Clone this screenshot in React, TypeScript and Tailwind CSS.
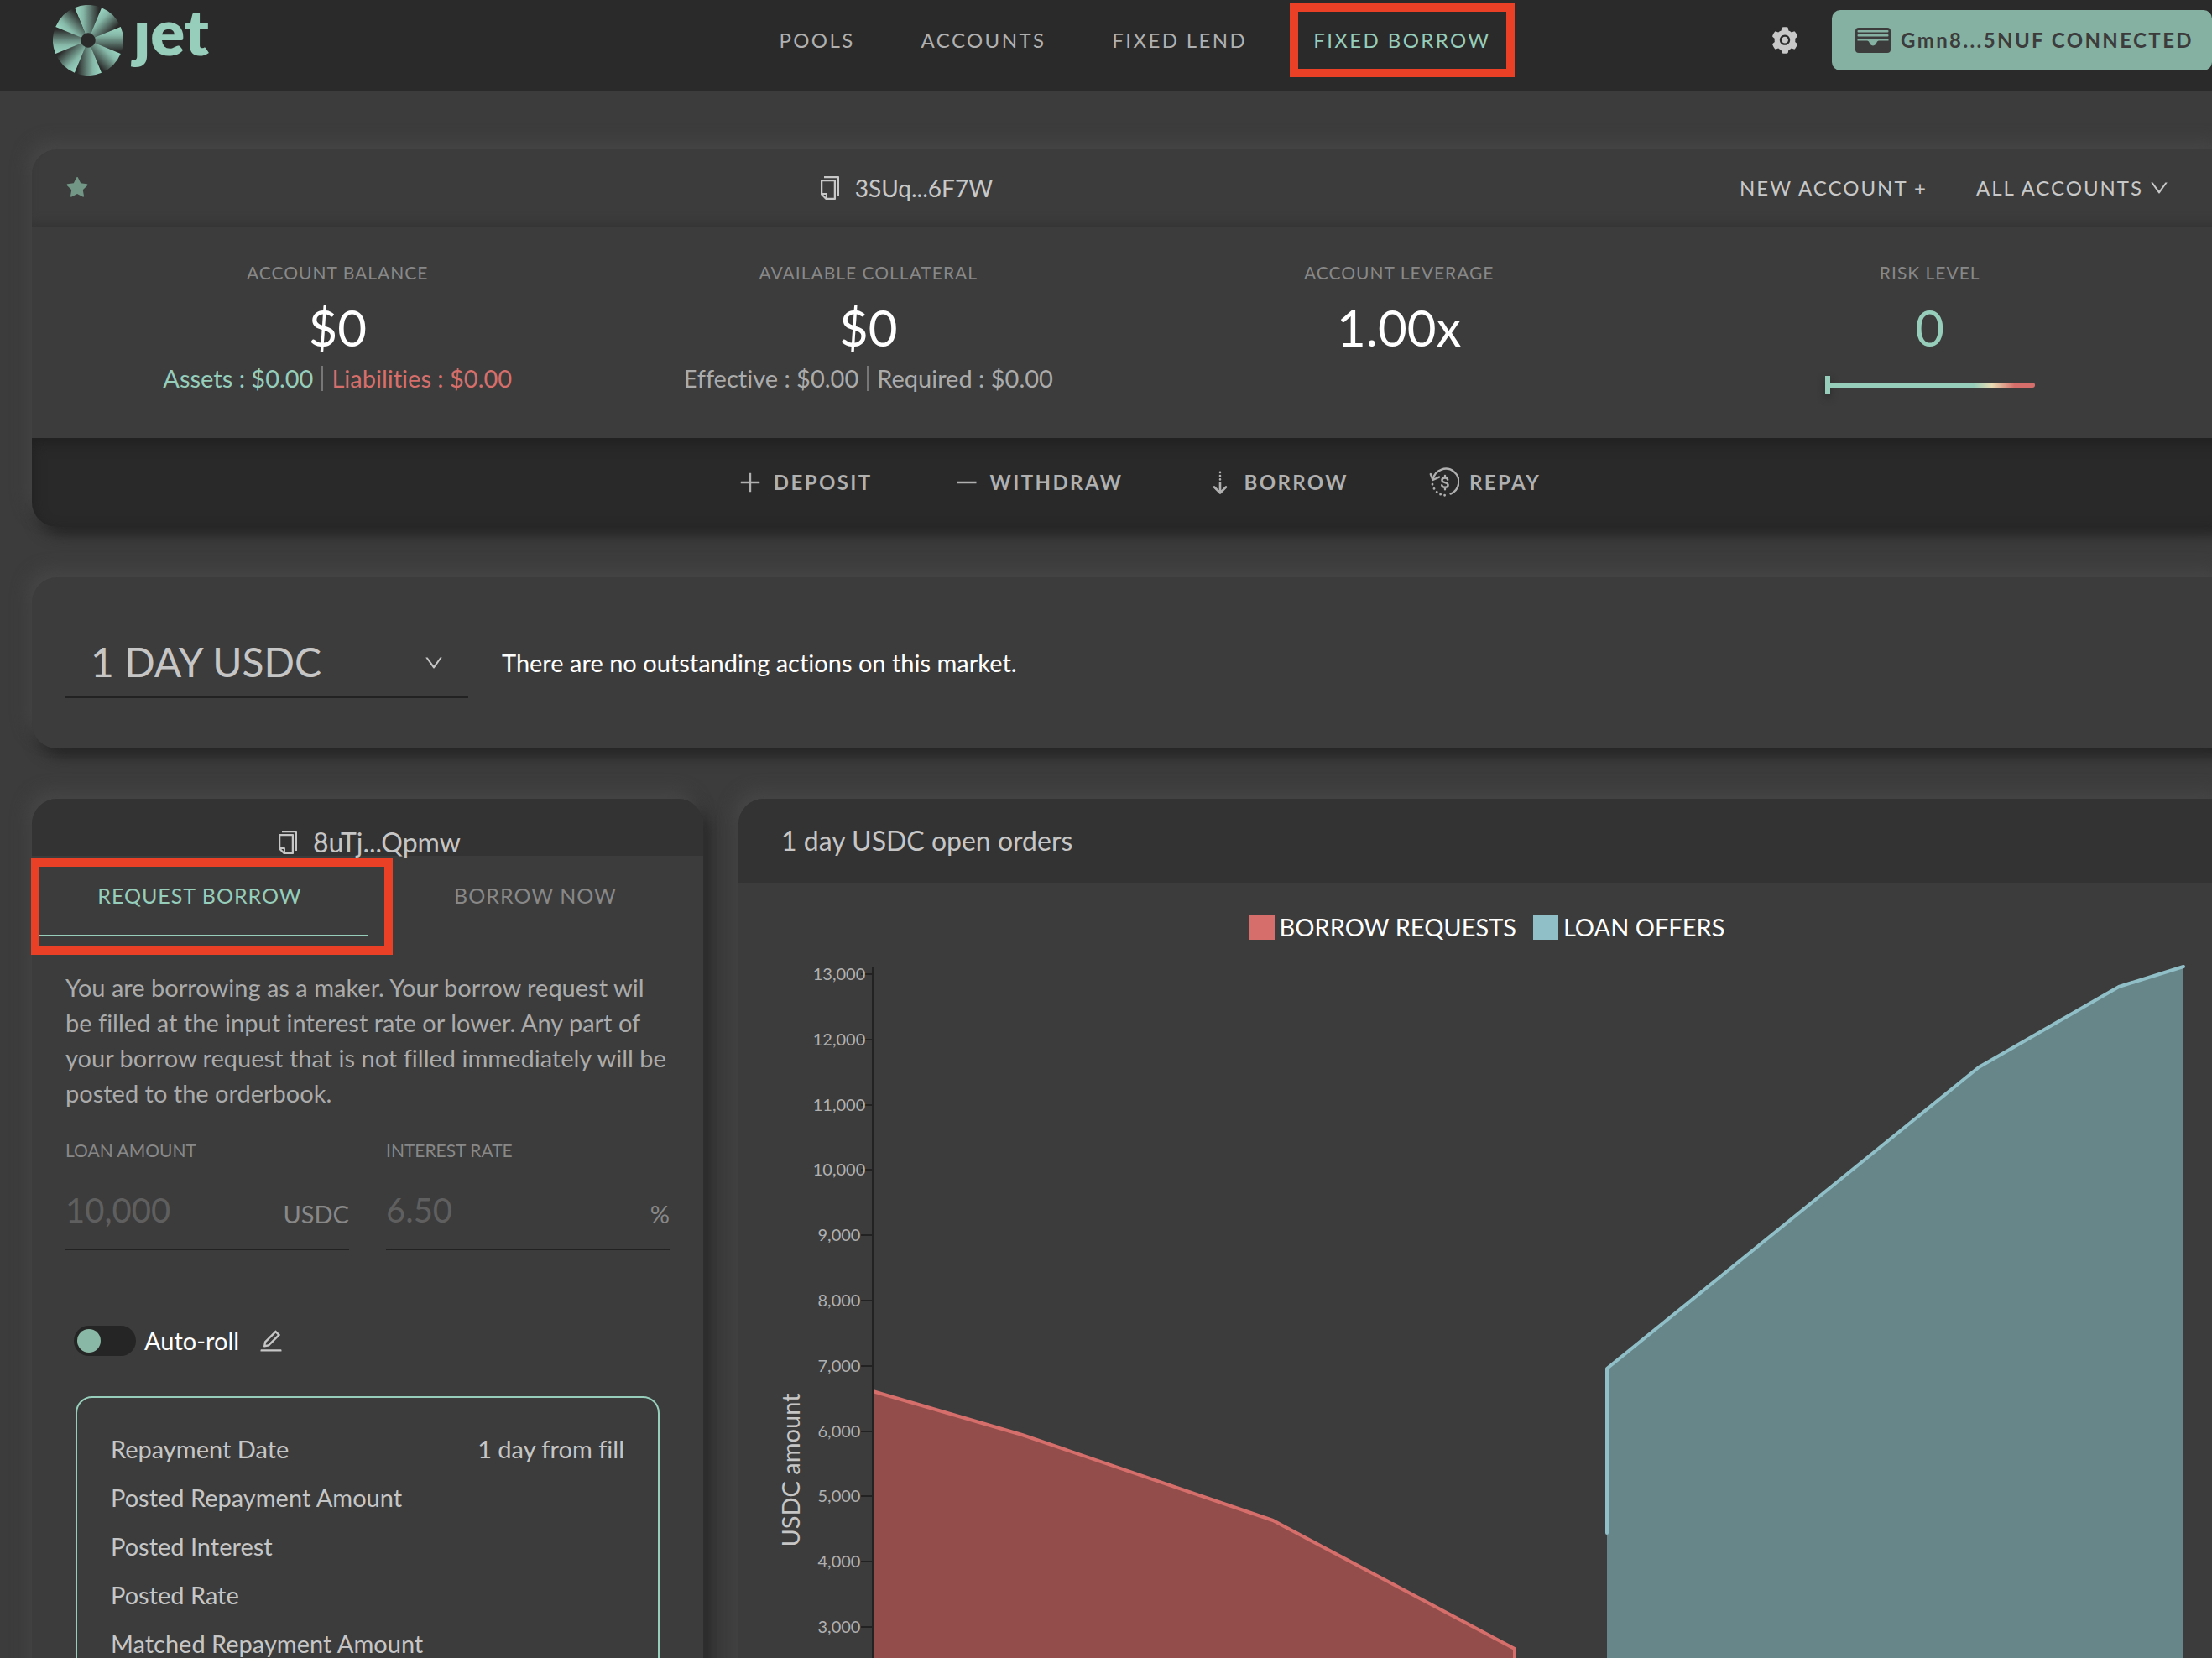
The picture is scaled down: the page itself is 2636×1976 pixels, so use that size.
import type { ReactNode } from 'react';
import {
  AiFillSetting,
  AiFillStar,
  AiOutlineCopy,
  AiOutlineDown,
  AiOutlineEdit,
  AiOutlineMinus,
  AiOutlinePlus,
} from 'react-icons/ai';

const CARD =
  'rounded-[30px] bg-[#3c3c3c] shadow-[-6px_-10px_18px_#464646,6px_8px_18px_#202020]';

function Logo() {
  const blades = [0, 45, 90, 135, 180, 225, 270, 315];
  return (
    <a href="#home" aria-label="jet" className="flex items-center gap-3 text-[#96cdbb]">
      <svg className="size-[84px]" viewBox="-42 -42 84 84" aria-hidden="true">
        <defs>
          <linearGradient id="blade" gradientUnits="userSpaceOnUse" x1="-16" y1="0" x2="13" y2="0">
            <stop offset="0" stopColor="#9bd6c3" />
            <stop offset="0.35" stopColor="#86b8a8" />
            <stop offset="1" stopColor="#2a2a2a" />
          </linearGradient>
        </defs>
        {blades.map((angle) => (
          <path
            key={angle}
            d="M-16 -38.8 A42 42 0 0 1 16 -38.8 L3.4 -8 A8.7 8.7 0 0 0 -3.4 -8 Z"
            fill="url(#blade)"
            transform={`rotate(${angle})`}
          />
        ))}
      </svg>
      <span className="pb-[22px] text-[76px] leading-[58px] font-extrabold">ȷet</span>
    </a>
  );
}

function WalletIcon() {
  return (
    <svg className="h-[30px] w-[42px]" viewBox="0 0 42 30" aria-hidden="true">
      <rect width="42" height="30" rx="4" fill="#3c3c3c" />
      <g fill="#85b1a3">
        <rect x="2.5" y="3" width="37" height="2.4" rx="1" />
        <rect x="2.5" y="8" width="37" height="2.4" rx="1" />
        <path d="M2.5 13h37v2.6H28c-1.500 0-2 1-2.600 2.200-.8 1.700-2 3.700-4.400 3.700s-3.600-2-4.400-3.700C16 16.600 15.500 15.600 14 15.600H2.500z" />
      </g>
    </svg>
  );
}

function BorrowIcon() {
  return (
    <svg
      className="h-7 w-9"
      viewBox="0 0 36 28"
      fill="none"
      stroke="currentColor"
      strokeWidth="2.6"
      strokeLinecap="round"
      strokeLinejoin="round"
      aria-hidden="true"
    >
      <path d="M20 14.500v11.500M13 19.500 20 26.500 27 19.500" />
      <path d="M20 1.800v.1M20 6.100v.1M20 10.400v.1" />
    </svg>
  );
}

function RepayIcon() {
  return (
    <svg
      className="size-9"
      viewBox="0 0 36 36"
      fill="none"
      stroke="currentColor"
      strokeWidth="2.400"
      strokeLinecap="round"
      strokeLinejoin="round"
      aria-hidden="true"
    >
      <path d="M4.700 14A15.500 15.500 0 1 1 25.600 31.600" />
      <path d="M1.800 8 4.500 15 12 11.600" />
      <path d="M4 20.200v.1M6 25.300v.1M9.200 29.300v.1M13.600 32.100v.1M18.600 33.200v.1" strokeWidth="2.800" />
      <path d="M22.200 14.800c-.3-1.500-1.500-2.300-3.300-2.300-2.100 0-3.500 1.100-3.500 2.700 0 3.800 7.200 2 7.200 5.900 0 1.700-1.500 2.700-3.600 2.700-2 0-3.500-.9-3.800-2.500M19 10v2.500M19 23.800v2.500" />
    </svg>
  );
}

function Header() {
  const link = 'relative leading-8 text-[24px] tracking-widest';
  return (
    <header className="grid h-[108px] grid-cols-[1fr_auto_1fr] items-center bg-[#2a2a2a] pr-[66px] pb-3 pl-[63px]">
      <Logo />
      <nav className="flex gap-[79px] pl-1.5 text-[#b0b0b0]">
        <a href="#pools" className={link}>POOLS</a>
        <a href="#accounts" className={link}>ACCOUNTS</a>
        <a href="#lend" className={link}>FIXED LEND</a>
        <a href="#borrow" className={`${link} text-[#96cdbb]`} aria-current="page">
          FIXED BORROW
          <span className="absolute -inset-7 border-10 border-[#e94026]" />
        </a>
      </nav>
      <div className="flex items-center justify-end gap-[38px]">
        <button type="button" aria-label="Settings" className="text-[#c8c8c8]">
          <AiFillSetting className="size-9" />
        </button>
        <button
          type="button"
          className="flex h-[72px] items-center gap-3 rounded-[10px] bg-[#85b1a3] pr-[22px] pl-7 text-[24px] font-bold tracking-widest text-[#3c3c3c]"
        >
          <WalletIcon />
          Gmn8...5NUF CONNECTED
        </button>
      </div>
    </header>
  );
}

function Stat({ label, value, tone, children }: { label: string; value: string; tone: string; children?: ReactNode }) {
  return (
    <div className="flex flex-col items-center">
      <div className="text-[21px] leading-6 tracking-[1px] text-[#888888]">{label}</div>
      <div className={`mt-[17px] text-[60px] leading-[72px] ${tone}`}>{value}</div>
      {children}
    </div>
  );
}

function Pair({ left, right }: { left: ReactNode; right: ReactNode }) {
  return (
    <div className="mt-2 flex items-center gap-2.5 text-[29px] leading-[34px] text-[#ababab]">
      {left}
      <span className="h-[30px] w-0.5 bg-[#777777]" />
      {right}
    </div>
  );
}

function AccountCard() {
  const action = 'flex items-center gap-3 tracking-widest';
  return (
    <section className={CARD}>
      <div className="flex h-[92px] items-center justify-between rounded-t-[30px] pr-[78px] pl-[39px] text-[#c8c8c8] shadow-[inset_0_-10px_12px_-6px_#343434]">
        <button type="button" aria-label="Favourite" className="text-[#739787]">
          <AiFillStar className="size-[30px]" />
        </button>
        <button type="button" className="mr-6 flex items-center gap-3.5 text-[28px]">
          <AiOutlineCopy className="size-8" />
          3SUq...6F7W
        </button>
        <div className="flex gap-[58px] text-[24px] tracking-[2px]">
          <button type="button">NEW ACCOUNT +</button>
          <button type="button" className="flex items-center gap-1.5">
            ALL ACCOUNTS
            <AiOutlineDown className="size-[26px]" />
          </button>
        </div>
      </div>

      <div className="grid grid-cols-4 px-12 pt-[43px] pb-[52px]">
        <Stat label="ACCOUNT BALANCE" value="$0" tone="text-white">
          <Pair
            left={<span className="text-[#96cdbb]">Assets : $0.00</span>}
            right={<span className="text-[#d66f6b]">Liabilities : $0.00</span>}
          />
        </Stat>
        <Stat label="AVAILABLE COLLATERAL" value="$0" tone="text-white">
          <Pair left={<span>Effective : $0.00</span>} right={<span>Required : $0.00</span>} />
        </Stat>
        <Stat label="ACCOUNT LEVERAGE" value="1.00x" tone="text-white" />
        <Stat label="RISK LEVEL" value="0" tone="text-[#96cdbb]">
          <div className="mt-[22px] flex h-[22px] w-[250px] items-center">
            <div className="h-full w-1.5 bg-[#96cdbb] shadow-[0_4px_8px_#2a2a2a]" />
            <div className="h-1.5 grow rounded-r-full bg-[linear-gradient(to_right,#96cdbb_70%,#e9dcb4_79%,#d66f6b_90%)]" />
          </div>
        </Stat>
      </div>

      <div className="flex h-[106px] items-center justify-center gap-24 rounded-b-[30px] bg-[#292929] pl-3 text-[24px] font-bold text-[#b0b0b0] shadow-[inset_0_6px_16px_#202020]">
        <button type="button" className={action}>
          <AiOutlinePlus className="size-8" />
          DEPOSIT
        </button>
        <button type="button" className={action}>
          <AiOutlineMinus className="size-8" />
          WITHDRAW
        </button>
        <button type="button" className={action}>
          <BorrowIcon />
          BORROW
        </button>
        <button type="button" className={action}>
          <RepayIcon />
          REPAY
        </button>
      </div>
    </section>
  );
}

function MarketCard() {
  return (
    <section className={`${CARD} flex items-center gap-10 px-10 py-[60px]`}>
      <div className="relative flex w-[480px] items-center">
        <select
          aria-label="Market"
          className="h-[84px] w-full appearance-none border-b-2 border-[#222222] bg-transparent pl-[30px] text-[48px] text-[#c6c6c6]"
        >
          <option>1 DAY USDC</option>
        </select>
        <AiOutlineDown className="pointer-events-none absolute right-7 size-[26px] text-[#c6c6c6]" />
      </div>
      <p className="text-[29px] text-white">There are no outstanding actions on this market.</p>
    </section>
  );
}

function Field({ id, label, placeholder, unit }: { id: string; label: string; placeholder: string; unit: string }) {
  return (
    <div className="min-w-0">
      <label htmlFor={id} className="block text-[21px] leading-6 text-[#888888]">
        {label}
      </label>
      <div className="mt-3 flex h-[95px] items-center border-b-2 border-[#222222]">
        <input
          id={id}
          placeholder={placeholder}
          className="w-0 grow bg-transparent text-[40px] outline-none placeholder:text-[#5f5f5f]"
        />
        <span className="pt-2.5 text-[29px] text-[#888888]">{unit}</span>
      </div>
    </div>
  );
}

function BorrowCard() {
  const rows = [
    ['Repayment Date', '1 day from fill'],
    ['Posted Repayment Amount', ''],
    ['Posted Interest', ''],
    ['Posted Rate', ''],
    ['Matched Repayment Amount', ''],
  ];
  const tab = 'h-24 pt-0.5 text-[25px] tracking-[1px] border-b-2';
  return (
    <section className={`${CARD} pb-20`}>
      <div className="flex h-[68px] items-end justify-center rounded-t-[30px] bg-[#333333]">
        <button type="button" className="flex items-center gap-3.5 text-[32px] leading-8 text-[#c6c6c6]">
          <AiOutlineCopy className="size-8" />
          8uTj...Qpmw
        </button>
      </div>

      <div role="tablist" className="relative grid grid-cols-2">
        <button type="button" role="tab" aria-selected="true" className={`${tab} border-[#96cdbb] text-[#96cdbb]`}>
          REQUEST BORROW
        </button>
        <button type="button" role="tab" aria-selected="false" className={`${tab} border-transparent text-[#888888]`}>
          BORROW NOW
        </button>
        <span className="pointer-events-none absolute top-[3px] -left-px h-[115px] w-[431px] border-10 border-[#e94026]" />
      </div>

      <div className="px-10 pt-10">
        <p className="-mr-2 text-[29px] leading-[42px] text-[#ababab]">
          You are borrowing as a maker. Your borrow request wil be filled at the input interest rate or lower. Any part of
          your borrow request that is not filled immediately will be posted to the orderbook.
        </p>

        <div className="mt-[35px] grid grid-cols-2 gap-11">
          <Field id="loan-amount" label="LOAN AMOUNT" placeholder="10,000" unit="USDC" />
          <Field id="interest-rate" label="INTEREST RATE" placeholder="6.50" unit="%" />
        </div>

        <div className="mt-[90px] flex items-center gap-2.5 pl-2.5">
          <input
            id="auto-roll"
            type="checkbox"
            role="switch"
            className="h-9 w-[74px] appearance-none rounded-full bg-[#252525] p-1 before:block before:size-7 before:rounded-full before:bg-[#8ab8a6]"
          />
          <label htmlFor="auto-roll" className="text-[29px] leading-9 text-white">
            Auto-roll
          </label>
          <button type="button" aria-label="Edit auto-roll" className="ml-3 text-[#c6c6c6]">
            <AiOutlineEdit className="size-8" />
          </button>
        </div>

        <dl className="mx-3 mt-12 rounded-[20px] border-2 border-[#96cdbb] px-10 py-8 text-[29px] leading-[58px] text-[#c6c6c6]">
          {rows.map(([name, value]) => (
            <div key={name} className="flex justify-between">
              <dt>{name}</dt>
              <dd>{value}</dd>
            </div>
          ))}
        </dl>
      </div>
    </section>
  );
}

function OrdersChart() {
  const ticks = [13, 12, 11, 10, 9, 8, 7, 6, 5, 4, 3].map((n) => ({
    label: `${n},000`,
    y: Math.round(21 + (13 - n) * 77.8),
  }));
  return (
    <svg className="mt-5 block w-full" viewBox="0 0 1784 900" role="img" aria-label="Open orders by USDC amount">
      <path d="M160 518 338 570 637 672 925 825V900H160z" fill="#934e4c" />
      <path d="M160 518 338 570 637 672 925 825V900" fill="none" stroke="#d66f6b" strokeWidth="4" strokeLinejoin="round" />
      <path d="M1035 491 1478 132 1645 36 1722 12V900H1035z" fill="#67868a" />
      <path
        d="M1035 687V491L1478 132 1645 36 1722 12"
        fill="none"
        stroke="#90bfc8"
        strokeWidth="4"
        strokeLinejoin="round"
        strokeLinecap="round"
      />
      <path d="M160 13V900" stroke="#222222" strokeWidth="2" />
      {ticks.map(({ label, y }) => (
        <g key={label}>
          <path d={`M146 ${y}H160`} stroke="#222222" strokeWidth="2" />
          <text x="120" y={y + 7} textAnchor="middle" fontSize="20" fill="#b0b0b0">
            {label}
          </text>
        </g>
      ))}
      <text transform="translate(73 612) rotate(-90)" textAnchor="middle" fontSize="29" fill="#c6c6c6">
        USDC amount
      </text>
    </svg>
  );
}

function OrdersCard() {
  return (
    <section className={`${CARD} min-w-0`}>
      <h2 className="flex h-[100px] items-center rounded-t-[30px] bg-[#333333] pl-[51px] text-[32px] text-[#c6c6c6]">
        1 day USDC open orders
      </h2>
      <div className="flex justify-center gap-5 pt-[38px] text-[29px] leading-[30px] text-white">
        <span className="flex gap-1.5">
          <span className="size-[30px] bg-[#d66f6b]" />
          BORROW REQUESTS
        </span>
        <span className="flex gap-1.5">
          <span className="size-[30px] bg-[#90bfc8]" />
          LOAN OFFERS
        </span>
      </div>
      <OrdersChart />
    </section>
  );
}

export default function App() {
  return (
    <div className="h-screen overflow-hidden bg-[#3c3c3c] font-['Lato',sans-serif] [font-variant-ligatures:no-common-ligatures]">
      <div className="w-[calc(100%+66px)]">
        <Header />
        <main className="flex flex-col gap-[60px] px-[38px] pt-[70px]">
          <AccountCard />
          <MarketCard />
          <div className="grid grid-cols-[800px_1fr] gap-[42px]">
            <BorrowCard />
            <OrdersCard />
          </div>
        </main>
      </div>
    </div>
  );
}
